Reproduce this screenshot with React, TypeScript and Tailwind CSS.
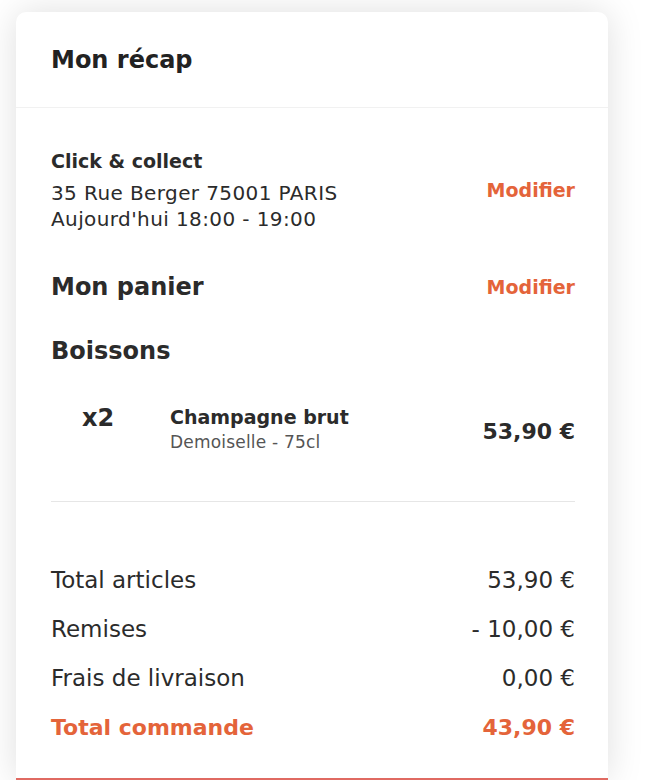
const orange = "text-[#e4643a]";

function TotalRow({ label, value, accent }: { label: string; value: string; accent?: boolean }) {
  return (
    <div
      className={`flex h-[49px] items-center justify-between ${
        accent ? `${orange} text-[22px] font-bold` : "text-[23px] text-[#2b2b2b]"
      }`}
    >
      <span>{label}</span>
      <span>{value}</span>
    </div>
  );
}

export default function App() {
  return (
    <div
      className="min-h-[780px] bg-white pl-[16px] pr-[42px] pt-[12px]"
      style={{ fontFamily: '"DejaVu Sans", "Open Sans", sans-serif' }}
    >
      <div className="h-[768px] rounded-t-[10px] border-b-2 border-[#e06a62] bg-white shadow-[0_0_36px_rgba(0,0,0,0.13)]">
        <div className="flex h-[96px] items-center border-b border-[#f1f1f1] px-[35px]">
          <h1 className="text-[24px] font-bold leading-[30px] text-[#222]">Mon récap</h1>
        </div>

        <div className="pl-[35px] pr-[33px] text-[#2b2b2b]">
          <div className="mt-[40px] flex items-center justify-between">
            <div className="text-[19px] leading-[26px]">
              <p className="font-bold">Click & collect</p>
              <p className="mt-[6px] text-[20px] tracking-[0.4px]">35 Rue Berger 75001 PARIS</p>
              <p className="text-[20px] tracking-[0.4px]">Aujourd'hui 18:00 - 19:00</p>
            </div>
            <button className={`text-[19px] font-bold ${orange}`}>Modifier</button>
          </div>

          <div className="mt-[40px] flex items-center justify-between">
            <h2 className="text-[24px] font-bold leading-[30px]">Mon panier</h2>
            <button className={`text-[19px] font-bold ${orange}`}>Modifier</button>
          </div>

          <h2 className="mt-[34px] text-[24px] font-bold leading-[30px]">Boissons</h2>

          <div className="mt-[38px] flex items-center pb-[48px]">
            <span className="w-[119px] self-start pl-[31px] text-[24px] font-bold leading-[28px]">x2</span>
            <div className="flex-1">
              <p className="text-[19px] font-bold leading-[26px]">Champagne brut</p>
              <p className="mt-[1px] text-[17px] leading-[22px] tracking-[0.2px] text-[#555]">
                Demoiselle - 75cl
              </p>
            </div>
            <span className="mt-[6px] text-[22px] font-bold">53,90 €</span>
          </div>

          <div className="border-t border-[#e6e6e6] pt-[54px]">
            <TotalRow label="Total articles" value="53,90 €" />
            <TotalRow label="Remises" value="- 10,00 €" />
            <TotalRow label="Frais de livraison" value="0,00 €" />
            <TotalRow label="Total commande" value="43,90 €" accent />
          </div>
        </div>
      </div>
    </div>
  );
}
